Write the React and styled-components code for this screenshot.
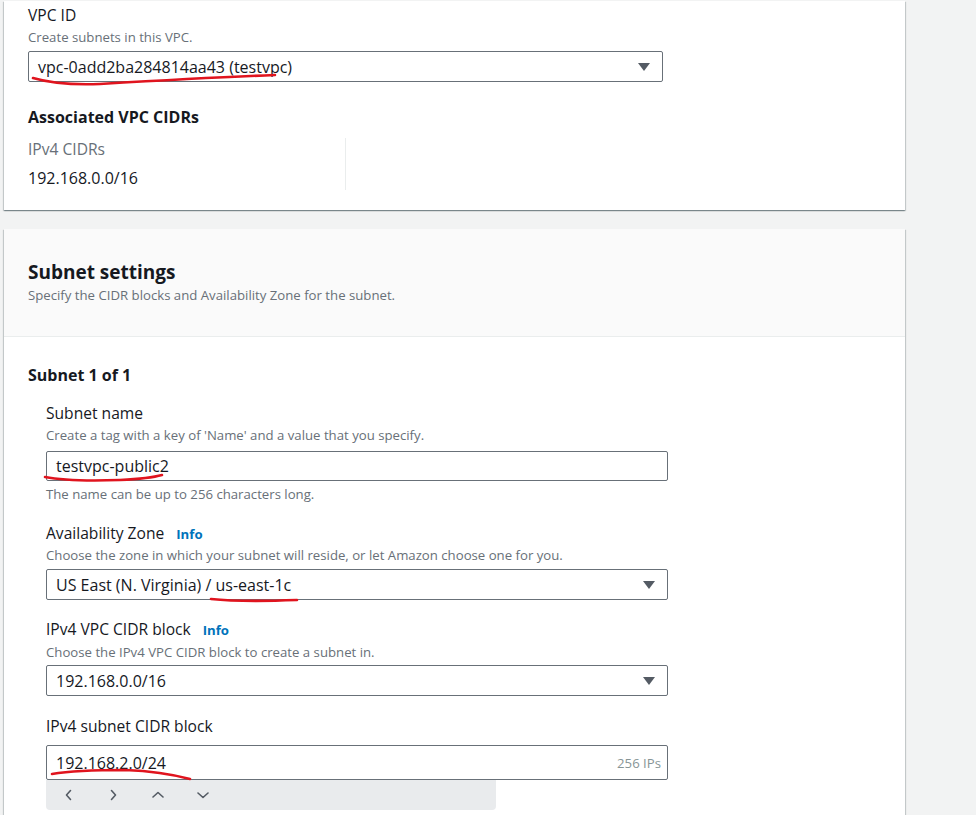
import React from "react";
import styled, { createGlobalStyle } from "styled-components";

const GlobalStyle = createGlobalStyle`
  html, body { margin: 0; padding: 0; background: #f2f3f3; }
  body { font-family: "Open Sans", "Noto Sans", sans-serif; color: #16191f; }
  * { box-sizing: border-box; }
`;

const Page = styled.div`
  position: relative;
  width: 976px;
  height: 815px;
  overflow: hidden;
  padding: 1px 0 0 4px;
  display: flex;
  flex-direction: column;
  gap: 19px;
`;

const Card = styled.section`
  width: 901px;
  background: #ffffff;
  box-shadow: 0 1px 1px 0 rgba(0, 28, 36, 0.3), 1px 1px 1px 0 rgba(0, 28, 36, 0.15),
    -1px 1px 1px 0 rgba(0, 28, 36, 0.15);
  flex-shrink: 0;
`;

const CardBody = styled.div`
  padding: ${(p) => p.$pad || "4px 24px 20px 24px"};
  display: flex;
  flex-direction: column;
`;

const CardHeader = styled.header`
  background: #fafafa;
  border-bottom: 1px solid #eaeded;
  padding: 31px 24px 33px 24px;
  display: flex;
  flex-direction: column;
`;

const H2 = styled.h2`
  margin: 0;
  font-size: 19px;
  line-height: 24px;
  font-weight: 700;
  color: #16191f;
`;

const H3 = styled.h3`
  margin: ${(p) => p.$m || "0"};
  font-size: 16px;
  line-height: 20px;
  font-weight: 700;
  color: #16191f;
`;

const Label = styled.div`
  display: flex;
  align-items: baseline;
  gap: 12px;
  font-size: 15.6px;
  line-height: 20px;
  color: #16191f;
  margin-top: ${(p) => p.$mt || "0"}px;
`;

const Info = styled.span`
  font-size: 13.2px;
  font-weight: 700;
  color: #0073bb;
`;

const Desc = styled.div`
  font-size: 13.2px;
  line-height: 16px;
  color: #687078;
  margin-top: ${(p) => p.$mt || "0"}px;
`;

const Field = styled.div`
  position: relative;
  width: ${(p) => p.$w}px;
  height: ${(p) => p.$h}px;
  margin-top: ${(p) => p.$mt || "0"}px;
  border: 1px solid #687078;
  border-radius: 2px;
  background: #fff;
  display: flex;
  align-items: center;
  justify-content: space-between;
  padding: 0 12px 0 9px;
  font-size: 16px;
  color: #16191f;
`;

const Suffix = styled.span`
  font-size: 13.2px;
  color: #879596;
  margin-right: -6px;
`;

const Caret = styled.span`
  width: 0;
  height: 0;
  border-left: 6px solid transparent;
  border-right: 6px solid transparent;
  border-top: 8px solid #545b64;
  margin-top: 1px;
`;

const Indent = styled.div`
  padding-left: 18px;
  display: flex;
  flex-direction: column;
`;

const Columns = styled.div`
  display: flex;
  margin-top: 11px;
`;

const Column = styled.div`
  width: 318px;
  border-right: 1px solid #eaeded;
  padding: 1px 0 2px 0;
  display: flex;
  flex-direction: column;
  gap: 9px;
`;

const KeyText = styled.div`
  font-size: ${(p) => (p.$muted ? "15.6px" : "16px")};
  line-height: 20px;
  color: ${(p) => (p.$muted ? "#687078" : "#16191f")};
`;

const NavBar = styled.div`
  width: 450px;
  height: 30px;
  background: #e9ebed;
  border-radius: 0 0 4px 4px;
  display: flex;
  align-items: center;
  gap: 25px;
  padding-left: 12px;
`;

const NavBtn = styled.span`
  width: 20px;
  height: 20px;
  display: flex;
  align-items: center;
  justify-content: center;
`;

const Overlay = styled.svg`
  position: absolute;
  left: 0;
  top: 0;
  width: 976px;
  height: 815px;
  pointer-events: none;
`;

const chev = {
  left: "M6.5 1.5 L2.5 6 L6.5 10.5",
  right: "M2.5 1.5 L6.5 6 L2.5 10.5",
  up: "M1 7 L6 2.5 L11 7",
  down: "M1 3 L6 7.5 L11 3",
};

function Chevron({ dir }) {
  const w = dir === "left" || dir === "right" ? 9 : 12;
  const h = dir === "left" || dir === "right" ? 12 : 10;
  return (
    <NavBtn>
      <svg width={w} height={h} viewBox={`0 0 ${w} ${h}`}>
        <path d={chev[dir]} fill="none" stroke="#545b64" strokeWidth="1.6" strokeLinecap="round" strokeLinejoin="round" />
      </svg>
    </NavBtn>
  );
}

export default function App() {
  return (
    <>
      <GlobalStyle />
      <Page>
        <Card>
          <CardBody>
            <Label>VPC ID</Label>
            <Desc $mt={4}>Create subnets in this VPC.</Desc>
            <Field $w={635} $h={31} $mt={6}>
              <span>vpc-0add2ba284814aa43 (testvpc)</span>
              <Caret />
            </Field>
            <H3 $m="25px 0 0 0">Associated VPC CIDRs</H3>
            <Columns>
              <Column>
                <KeyText $muted>IPv4 CIDRs</KeyText>
                <KeyText>192.168.0.0/16</KeyText>
              </Column>
            </Columns>
          </CardBody>
        </Card>

        <Card>
          <CardHeader>
            <H2>Subnet settings</H2>
            <Desc $mt={3}>Specify the CIDR blocks and Availability Zone for the subnet.</Desc>
          </CardHeader>
          <CardBody $pad="28px 24px 40px 24px">
            <H3>Subnet 1 of 1</H3>
            <Indent>
              <Label $mt={18}>Subnet name</Label>
              <Desc $mt={4}>Create a tag with a key of 'Name' and a value that you specify.</Desc>
              <Field $w={622} $h={30} $mt={8}>
                <span>testvpc-public2</span>
              </Field>
              <Desc $mt={5}>The name can be up to 256 characters long.</Desc>

              <Label $mt={21}>
                Availability Zone <Info>Info</Info>
              </Label>
              <Desc $mt={3}>Choose the zone in which your subnet will reside, or let Amazon choose one for you.</Desc>
              <Field $w={622} $h={31} $mt={6}>
                <span>US East (N. Virginia) / us-east-1c</span>
                <Caret />
              </Field>

              <Label $mt={19}>
                IPv4 VPC CIDR block <Info>Info</Info>
              </Label>
              <Desc $mt={4}>Choose the IPv4 VPC CIDR block to create a subnet in.</Desc>
              <Field $w={622} $h={31} $mt={5}>
                <span>192.168.0.0/16</span>
                <Caret />
              </Field>

              <Label $mt={20}>IPv4 subnet CIDR block</Label>
              <Field $w={622} $h={35} $mt={9}>
                <span>192.168.2.0/24</span>
                <Suffix>256 IPs</Suffix>
              </Field>
              <NavBar>
                <Chevron dir="left" />
                <Chevron dir="right" />
                <Chevron dir="up" />
                <Chevron dir="down" />
              </NavBar>
            </Indent>
          </CardBody>
        </Card>

        <Overlay viewBox="0 0 976 815">
          <g fill="none" stroke="#e0141e" strokeWidth="2.6" strokeLinecap="round">
            <path d="M33 78 C50 83 75 85 100 84 C150 81 220 77 275 75" />
            <path d="M45 477 C60 480 90 481 120 480 C140 479 155 477 162 475" />
            <path d="M211 599 C230 601 270 601 297 600" />
            <path d="M52 774 C70 771 100 770 125 770 C150 771 175 775 190 779" />
          </g>
        </Overlay>
      </Page>
    </>
  );
}
